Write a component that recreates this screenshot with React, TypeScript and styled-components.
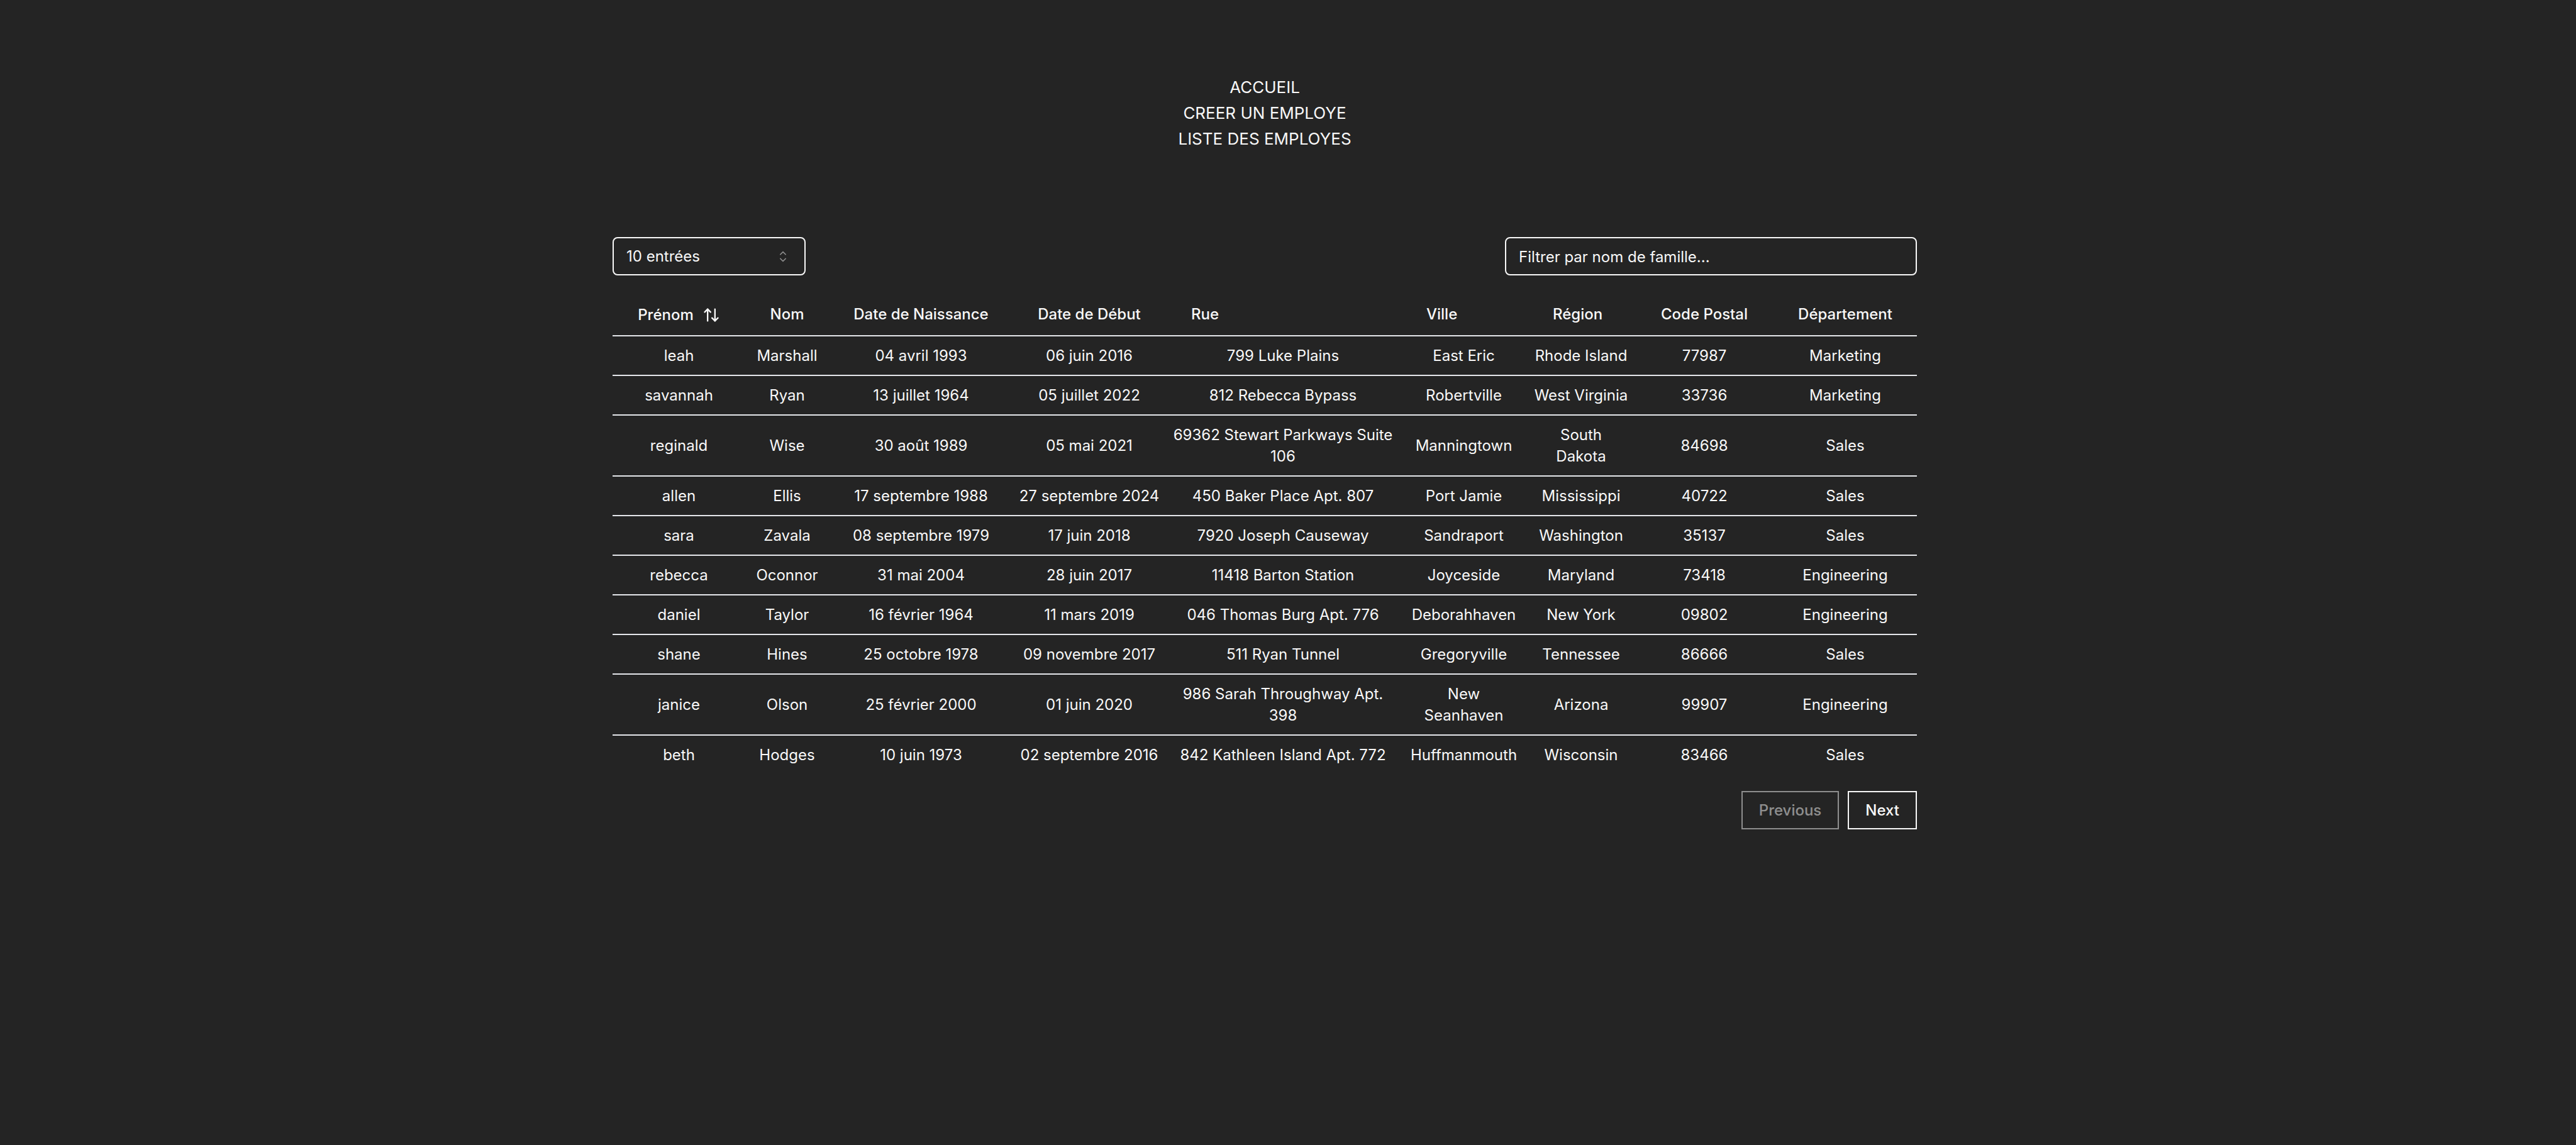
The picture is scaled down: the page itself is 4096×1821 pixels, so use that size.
import React, { useState } from "react";
import styled, { createGlobalStyle } from "styled-components";
import { ArrowUpDown } from "lucide-react";

const GlobalStyle = createGlobalStyle`
  *, *::before, *::after { box-sizing: border-box; }
  body {
    margin: 0;
    background: #242424;
    color: #f8f8f8;
    font-family: Inter, "Liberation Sans", sans-serif;
    font-size: 24px;
    line-height: 34px;
  }
  button, input, select { font: inherit; color: inherit; }
`;

const Page = styled.div`
  min-height: 100vh;
  padding: 118px 74px 64px 0;
`;

const Shell = styled.div`
  width: 100%;
  max-width: 2074px;
  margin: 0 auto;
`;

const Nav = styled.nav`
  display: flex;
  flex-direction: column;
  align-items: center;
  font-size: 26px;
  line-height: 41px;
  text-transform: uppercase;
`;

const NavLink = styled.a`
  color: inherit;
  text-decoration: none;
`;

const Toolbar = styled.div`
  display: flex;
  justify-content: space-between;
  align-items: center;
  margin: 136px 0 27px;
`;

const SelectBox = styled.label`
  display: grid;
  align-items: center;
  width: 307px;

  & > * { grid-area: 1 / 1; }
  & > svg { justify-self: end; margin-right: 22px; pointer-events: none; }
`;

const PageSize = styled.select`
  width: 100%;
  height: 61px;
  padding: 0 20px;
  appearance: none;
  border: 2px solid #f8f8f8;
  border-radius: 8px;
  background: transparent;

  option { background: #242424; }
`;

const Filter = styled.input`
  width: 655px;
  height: 61px;
  padding: 2px 20px 0;
  border: 2px solid #f8f8f8;
  border-radius: 8px;
  background: transparent;

  &::placeholder { color: #f8f8f8; opacity: 1; }
`;

const Table = styled.table`
  width: 100%;
  table-layout: fixed;
  border-collapse: separate;
  border-spacing: 0;
`;

const Col = styled.col<{ $width: number }>`
  width: ${({ $width }) => $width}px;
`;

const Head = styled.th<{ $left?: boolean }>`
  height: 70px;
  padding: 2px ${({ $left }) => ($left ? 41 : 0)}px 0;
  border-bottom: 2px solid #e5e7eb;
  font-weight: 500;
  text-align: ${({ $left }) => ($left ? "left" : "center")};
  white-space: nowrap;
`;

const SortButton = styled.button`
  display: inline-flex;
  align-items: center;
  gap: 14px;
  padding: 0;
  border: 0;
  background: none;
  vertical-align: middle;
`;

const Row = styled.tr`
  &:not(:last-child) > td { border-bottom: 2px solid #e5e7eb; }
`;

const Cell = styled.td`
  padding: 14px 0 13px;
  text-align: center;
  white-space: pre;
`;

const Pager = styled.div`
  display: flex;
  justify-content: flex-end;
  gap: 14px;
  padding-top: 27px;
`;

const PageButton = styled.button`
  height: 61px;
  padding: 0 26px;
  border: 2px solid #f8f8f8;
  background: transparent;
  font-weight: 500;

  &:disabled { opacity: 0.5; }
`;

const CaretSort = () => (
  <svg width="28" height="28" viewBox="0 0 15 15" fill="currentColor" opacity="0.5" aria-hidden="true">
    <path d="M4.93179 5.43179C4.75605 5.60753 4.75605 5.89245 4.93179 6.06819C5.10753 6.24392 5.39245 6.24392 5.56819 6.06819L7.49999 4.13638L9.43179 6.06819C9.60753 6.24392 9.89245 6.24392 10.0682 6.06819C10.2439 5.89245 10.2439 5.60753 10.0682 5.43179L7.81819 3.18179C7.73379 3.0974 7.61933 3.04999 7.49999 3.04999C7.38064 3.04999 7.26618 3.0974 7.18179 3.18179L4.93179 5.43179ZM10.0682 9.56819C10.2439 9.39245 10.2439 9.10753 10.0682 8.93179C9.89245 8.75606 9.60753 8.75606 9.43179 8.93179L7.49999 10.8636L5.56819 8.93179C5.39245 8.75606 5.10753 8.75606 4.93179 8.93179C4.75605 9.10753 4.75605 9.39245 4.93179 9.56819L7.18179 11.8182C7.35753 11.9939 7.64245 11.9939 7.81819 11.8182L10.0682 9.56819Z" />
  </svg>
);

const columns = [
  { label: "Prénom", width: 211, sortable: true },
  { label: "Nom", width: 133 },
  { label: "Date de Naissance", width: 293 },
  { label: "Date de Début", width: 242 },
  { label: "Rue", width: 374, left: true },
  { label: "Ville", width: 201, left: true },
  { label: "Région", width: 172, left: true },
  { label: "Code Postal", width: 220 },
  { label: "Département", width: 228 },
];

const employees = [
  ["leah", "Marshall", "04 avril 1993", "06 juin 2016", "799 Luke Plains", "East Eric", "Rhode Island", "77987", "Marketing"],
  ["savannah", "Ryan", "13 juillet 1964", "05 juillet 2022", "812 Rebecca Bypass", "Robertville", "West Virginia", "33736", "Marketing"],
  ["reginald", "Wise", "30 août 1989", "05 mai 2021", "69362 Stewart Parkways Suite\n106", "Manningtown", "South\nDakota", "84698", "Sales"],
  ["allen", "Ellis", "17 septembre 1988", "27 septembre 2024", "450 Baker Place Apt. 807", "Port Jamie", "Mississippi", "40722", "Sales"],
  ["sara", "Zavala", "08 septembre 1979", "17 juin 2018", "7920 Joseph Causeway", "Sandraport", "Washington", "35137", "Sales"],
  ["rebecca", "Oconnor", "31 mai 2004", "28 juin 2017", "11418 Barton Station", "Joyceside", "Maryland", "73418", "Engineering"],
  ["daniel", "Taylor", "16 février 1964", "11 mars 2019", "046 Thomas Burg Apt. 776", "Deborahhaven", "New York", "09802", "Engineering"],
  ["shane", "Hines", "25 octobre 1978", "09 novembre 2017", "511 Ryan Tunnel", "Gregoryville", "Tennessee", "86666", "Sales"],
  ["janice", "Olson", "25 février 2000", "01 juin 2020", "986 Sarah Throughway Apt.\n398", "New\nSeanhaven", "Arizona", "99907", "Engineering"],
  ["beth", "Hodges", "10 juin 1973", "02 septembre 2016", "842 Kathleen Island Apt. 772", "Huffmanmouth", "Wisconsin", "83466", "Sales"],
];

export default function App() {
  const [pageSize, setPageSize] = useState("10");
  const [filter, setFilter] = useState("");
  const rows = employees.filter((e) => e[1].toLowerCase().includes(filter.toLowerCase()));

  return (
    <>
      <GlobalStyle />
      <Page>
        <Shell>
          <Nav>
            <NavLink href="#accueil">Accueil</NavLink>
            <NavLink href="#creer">Creer un employe</NavLink>
            <NavLink href="#liste">Liste des employes</NavLink>
          </Nav>
          <main>
            <Toolbar>
              <SelectBox>
                <PageSize aria-label="Nombre d'entrées" value={pageSize} onChange={(e) => setPageSize(e.target.value)}>
                  <option value="10">10 entrées</option>
                  <option value="25">25 entrées</option>
                  <option value="50">50 entrées</option>
                </PageSize>
                <CaretSort />
              </SelectBox>
              <Filter
                aria-label="Filtrer par nom de famille"
                placeholder="Filtrer par nom de famille..."
                value={filter}
                onChange={(e) => setFilter(e.target.value)}
              />
            </Toolbar>
            <Table>
              <colgroup>
                {columns.map((c) => (
                  <Col key={c.label} $width={c.width} />
                ))}
              </colgroup>
              <thead>
                <tr>
                  {columns.map((c) => (
                    <Head key={c.label} scope="col" $left={c.left}>
                      {c.sortable ? (
                        <SortButton type="button">
                          {c.label}
                          <ArrowUpDown size={28} aria-hidden="true" />
                        </SortButton>
                      ) : (
                        c.label
                      )}
                    </Head>
                  ))}
                </tr>
              </thead>
              <tbody>
                {rows.map((row) => (
                  <Row key={row[0]}>
                    {row.map((value, i) => (
                      <Cell key={columns[i].label}>{value}</Cell>
                    ))}
                  </Row>
                ))}
              </tbody>
            </Table>
            <Pager>
              <PageButton type="button" disabled>Previous</PageButton>
              <PageButton type="button">Next</PageButton>
            </Pager>
          </main>
        </Shell>
      </Page>
    </>
  );
}
